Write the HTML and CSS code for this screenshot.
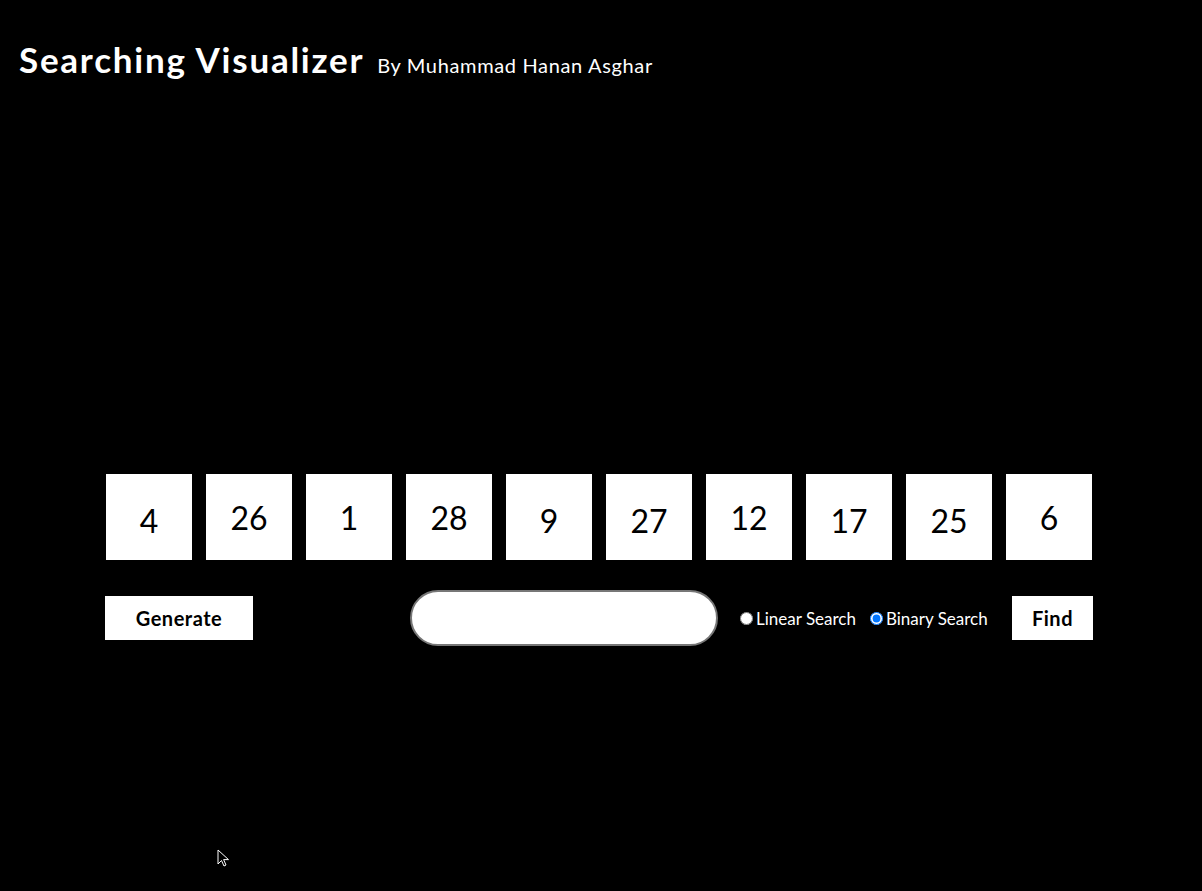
FILE: index.html
```html
<!DOCTYPE html>
<html>
<head>
<meta charset="utf-8">
<link rel="stylesheet" href="styles.css">
</head>
<body>
<header class="header">
  <h1 class="title">Searching Visualizer</h1>
  <span class="subtitle">By Muhammad Hanan Asghar</span>
</header>
<main class="main">
  <div class="cells">
    <div class="cell"><span class="n low">4</span></div>
    <div class="cell"><span class="n">26</span></div>
    <div class="cell"><span class="n">1</span></div>
    <div class="cell"><span class="n">28</span></div>
    <div class="cell"><span class="n low">9</span></div>
    <div class="cell"><span class="n low">27</span></div>
    <div class="cell"><span class="n">12</span></div>
    <div class="cell"><span class="n low">17</span></div>
    <div class="cell"><span class="n low">25</span></div>
    <div class="cell"><span class="n">6</span></div>
  </div>
  <div class="controls">
    <button class="btn btn-generate">Generate</button>
    <input class="search" type="text">
    <div class="radios">
      <label class="radio"><input type="radio" name="algo"><span>Linear Search</span></label>
      <label class="radio"><input type="radio" name="algo" checked><span>Binary Search</span></label>
    </div>
    <button class="btn btn-find">Find</button>
  </div>
</main>
<svg class="cursor" width="14" height="20" viewBox="0 0 14 20"><path d="M1 1 L1 15 L4.5 11.5 L7 17 L9 16 L6.6 10.6 L11.5 10.6 Z" fill="#000" stroke="#fff" stroke-width="1"/></svg>
</body>
</html>
```
FILE: styles.css
```css
html, body {
  margin: 0;
  padding: 0;
  background: #000;
  color: #fff;
  font-family: "Lato", "Open Sans", sans-serif;
  height: 891px;
  overflow: hidden;
}
.header {
  display: flex;
  align-items: baseline;
  gap: 13px;
  padding: 37px 0 0 19px;
}
.title {
  margin: 0;
  font-size: 35px;
  font-weight: 700;
  letter-spacing: 1.75px;
  line-height: 44px;
}
.subtitle {
  font-size: 20px;
  font-weight: 400;
  letter-spacing: 0.65px;
}
.main {
  display: flex;
  flex-direction: column;
  align-items: flex-start;
  padding: 393px 0 0 105px;
}
.cells {
  display: flex;
  gap: 14px;
  padding-left: 1px;
}
.cell {
  width: 86px;
  height: 86px;
  background: #fff;
  color: #000;
  display: flex;
  align-items: center;
  justify-content: center;
  font-size: 32px;
  font-weight: 400;
}
.n { position: relative; top: 0; }
.n.low { top: 3px; }
.controls {
  display: flex;
  align-items: center;
  margin-top: 30px;
  width: 988px;
}
.btn {
  background: #fff;
  color: #000;
  border: none;
  height: 44px;
  font-family: "Lato", sans-serif;
  font-weight: 700;
  font-size: 20px;
  letter-spacing: 0.5px;
  padding: 0;
}
.btn-generate { width: 148px; }
.btn-find { width: 81px; margin-left: 22px; }
.search {
  margin-left: 157px;
  width: 308px;
  height: 56px;
  box-sizing: border-box;
  border-radius: 28px;
  border: 2px solid #777;
  background: #fff;
  outline: none;
}
.radios {
  display: flex;
  gap: 14px;
  margin-left: 22px;
  width: 250px;
}
.radio {
  display: flex;
  align-items: center;
  font-size: 17px;
  color: #fff;
  white-space: nowrap;
}
.radio input {
  margin: 0 3px 0 0;
  width: 13px;
  height: 13px;
}
.cursor {
  position: absolute;
  left: 217px;
  top: 849px;
}
```
